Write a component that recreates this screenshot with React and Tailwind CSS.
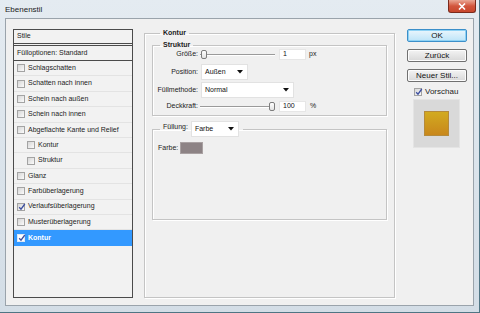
import React from 'react';

const font = "font-['Liberation_Sans',Arial,sans-serif]";

function Check({ checked, light }) {
    return (
        <span className={`relative inline-block w-[8px] h-[8px] shrink-0 border ${light ? 'border-[#dfe9f5] bg-white' : 'border-[#a3a3a3] bg-gradient-to-br from-[#d6d6d6] to-[#fbfbfb]'}`}>
            {checked && (
                <svg className="absolute left-[0px] top-[-1px]" width="8" height="8" viewBox="0 0 8 8">
                    <path d="M1.2 4.2 L3 6.2 L6.8 1" fill="none" stroke="#3d4fa0" strokeWidth="1.3" />
                </svg>
            )}
        </span>
    );
}

function Arrow() {
    return (
        <svg width="6" height="4" viewBox="0 0 6 4" className="shrink-0">
            <path d="M0 0 H6 L3 3.5 Z" fill="#111" />
        </svg>
    );
}

function Select({ value, w }) {
    return (
        <div className={`${w} h-[16px] bg-white border border-[#e2e2e2] flex items-center justify-between pl-[3px] pr-[4px] text-[7px] text-[#111]`}>
            <span>{value}</span>
            <Arrow />
        </div>
    );
}

function Slider({ pos }) {
    return (
        <div className="relative w-[75px] h-[11px] flex items-center">
            <div className="w-full h-[2px] border-t border-[#9a9a9a] bg-white" />
            <div
                className="absolute top-[1px] w-[6px] h-[9px] rounded-[2px] border border-[#7d7d7d] bg-gradient-to-b from-white to-[#e4e4e4]"
                style={{ left: pos }}
            />
        </div>
    );
}

function NumBox({ value }) {
    return (
        <div className="w-[27px] h-[11px] bg-white border border-[#e6e6e6] flex items-center pl-[3px] text-[7px] text-[#111]">
            {value}
        </div>
    );
}

function Button({ children, primary }) {
    return (
        <div
            className={`h-[13px] rounded-[2px] border flex items-center justify-center text-[8px] text-[#111] ${primary
                ? 'border-[#3c8fc9] bg-gradient-to-b from-[#eaf6fd] to-[#bde4f8] shadow-[inset_0_0_0_1px_#8ed2f5]'
                : 'border-[#707070] bg-gradient-to-b from-[#f4f4f4] to-[#d8d8d8] shadow-[inset_0_0_0_1px_#fcfcfc]'
                }`}
        >
            {children}
        </div>
    );
}

const styles = [
    { label: 'Schlagschatten' },
    { label: 'Schatten nach innen' },
    { label: 'Schein nach außen' },
    { label: 'Schein nach innen' },
    { label: 'Abgeflachte Kante und Relief' },
    { label: 'Kontur', indent: true },
    { label: 'Struktur', indent: true },
    { label: 'Glanz' },
    { label: 'Farbüberlagerung' },
    { label: 'Verlaufsüberlagerung', checked: true },
    { label: 'Musterüberlagerung' },
    { label: 'Kontur', checked: true, selected: true },
];

const groupBorder = 'border border-[#c4c4c4] shadow-[inset_1px_1px_0_#ffffff,1px_1px_0_#ffffff]';

export default function App() {
    return (
        <div className={`${font} w-[480px] h-[313px] overflow-hidden flex flex-col bg-gradient-to-b from-[#e4ebf1] to-[#d3dde6] border-r border-b border-[#4f7584]`}>
            {/* title bar */}
            <div className="h-[18px] shrink-0 flex items-start justify-between pl-[5px] pr-[3px]">
                <span className="mt-[4px] text-[8px] text-[#222]">Ebenenstil</span>
                <div className="w-[28px] h-[13px] rounded-b-[3px] border border-t-0 border-[#7a2a1c] bg-gradient-to-b from-[#e9a795] via-[#d2563d] to-[#c7462c] flex items-center justify-center">
                    <svg width="8" height="7" viewBox="0 0 8 7">
                        <path d="M1 0.5 L7 6.5 M7 0.5 L1 6.5" stroke="#fff" strokeWidth="1.6" />
                    </svg>
                </div>
            </div>

            {/* client area */}
            <div className="ml-[5px] mr-[5px] h-[288px] shrink-0 border border-[#9aa3ab] bg-[#f0f0f0] flex items-start pl-[7px] pr-[6px] pt-[10px] text-[7px] text-[#1c1c1c]">
                {/* style list */}
                <div className="w-[120px] h-[269px] shrink-0 border border-[#4b4b4b] bg-[#f2f2f2] flex flex-col">
                    <div className="h-[14px] border-b border-[#4b4b4b] flex items-center pl-[3px]">Stile</div>
                    <div className="h-[16px] mt-[1px] border-t border-b border-[#4b4b4b] flex items-center pl-[3px]">Fülloptionen: Standard</div>
                    {styles.map((s, i) => (
                        <div
                            key={i}
                            className={`h-[15.4px] shrink-0 flex items-center gap-[3px] ${s.indent ? 'pl-[13px]' : 'pl-[3px]'} ${s.selected ? 'bg-[#3399ff] text-white font-bold' : 'border-b border-[#e3e3e3]'}`}
                        >
                            <Check checked={s.checked} light={s.selected} />
                            <span>{s.label}</span>
                        </div>
                    ))}
                </div>

                {/* Kontur group */}
                <fieldset className={`ml-[11px] mt-[-1px] w-[251px] h-[270px] shrink-0 ${groupBorder} px-[7px]`}>
                    <legend className="ml-[8px] px-[3px] font-bold text-[7px] leading-[10px]">Kontur</legend>

                    <fieldset className={`mt-[2px] h-[76px] ${groupBorder}`}>
                        <legend className="ml-[7px] px-[3px] font-bold text-[7px] leading-[10px]">Struktur</legend>
                        <div className="flex flex-col">
                            <div className="h-[11px] mt-[-1px] flex items-center">
                                <span className="w-[46px] text-right pr-[1px]">Größe:</span>
                                <div className="ml-[1px]"><Slider pos={1} /></div>
                                <div className="ml-[4px]"><NumBox value="1" /></div>
                                <span className="ml-[3px]">px</span>
                            </div>
                            <div className="h-[16px] mt-[4px] flex items-center">
                                <span className="w-[46px] text-right pr-[1px]">Position:</span>
                                <div className="ml-[2px]"><Select value="Außen" w="w-[47px]" /></div>
                            </div>
                            <div className="h-[16px] mt-[2px] flex items-center">
                                <span className="w-[46px] text-right pr-[1px]">Füllmethode:</span>
                                <div className="ml-[2px]"><Select value="Normal" w="w-[93px]" /></div>
                            </div>
                            <div className="h-[11px] mt-[3px] flex items-center">
                                <span className="w-[46px] text-right pr-[1px]">Deckkraft:</span>
                                <div className="ml-[1px]"><Slider pos={69} /></div>
                                <div className="ml-[4px]"><NumBox value="100" /></div>
                                <span className="ml-[4px]">%</span>
                            </div>
                        </div>
                    </fieldset>

                    <fieldset className={`mt-[5px] h-[99px] ${groupBorder}`}>
                        <legend className="ml-[7px] pl-[3px] pr-[4px] flex items-center gap-[3px]">
                            <span className="mt-[-4px]">Füllung:</span>
                            <Select value="Farbe" w="w-[48px]" />
                        </legend>
                        <div className="flex items-center pl-[5px] mt-[5px]">
                            <span>Farbe:</span>
                            <div className="ml-[2px] w-[23px] h-[12px] bg-[#8d8385] border border-[#a9a1a2]" />
                        </div>
                    </fieldset>
                </fieldset>

                {/* buttons */}
                <div className="ml-[12px] w-[60px] shrink-0 flex flex-col">
                    <Button primary>OK</Button>
                    <div className="mt-[7px]"><Button>Zurück</Button></div>
                    <div className="mt-[7px]"><Button>Neuer Stil...</Button></div>
                    <div className="mt-[4px] ml-[7px] flex items-center gap-[3px] text-[8px]">
                        <Check checked />
                        <span>Vorschau</span>
                    </div>
                    <div className="mt-[1px] ml-[6px] w-[47px] h-[49px] bg-[#d9d9d9] border border-[#e4e4e4] flex items-center justify-center">
                        <div className="w-[25px] h-[25px] border border-[#b58a3a] bg-gradient-to-b from-[#d2aa20] to-[#c8871b]" />
                    </div>
                </div>
            </div>
        </div>
    );
}
